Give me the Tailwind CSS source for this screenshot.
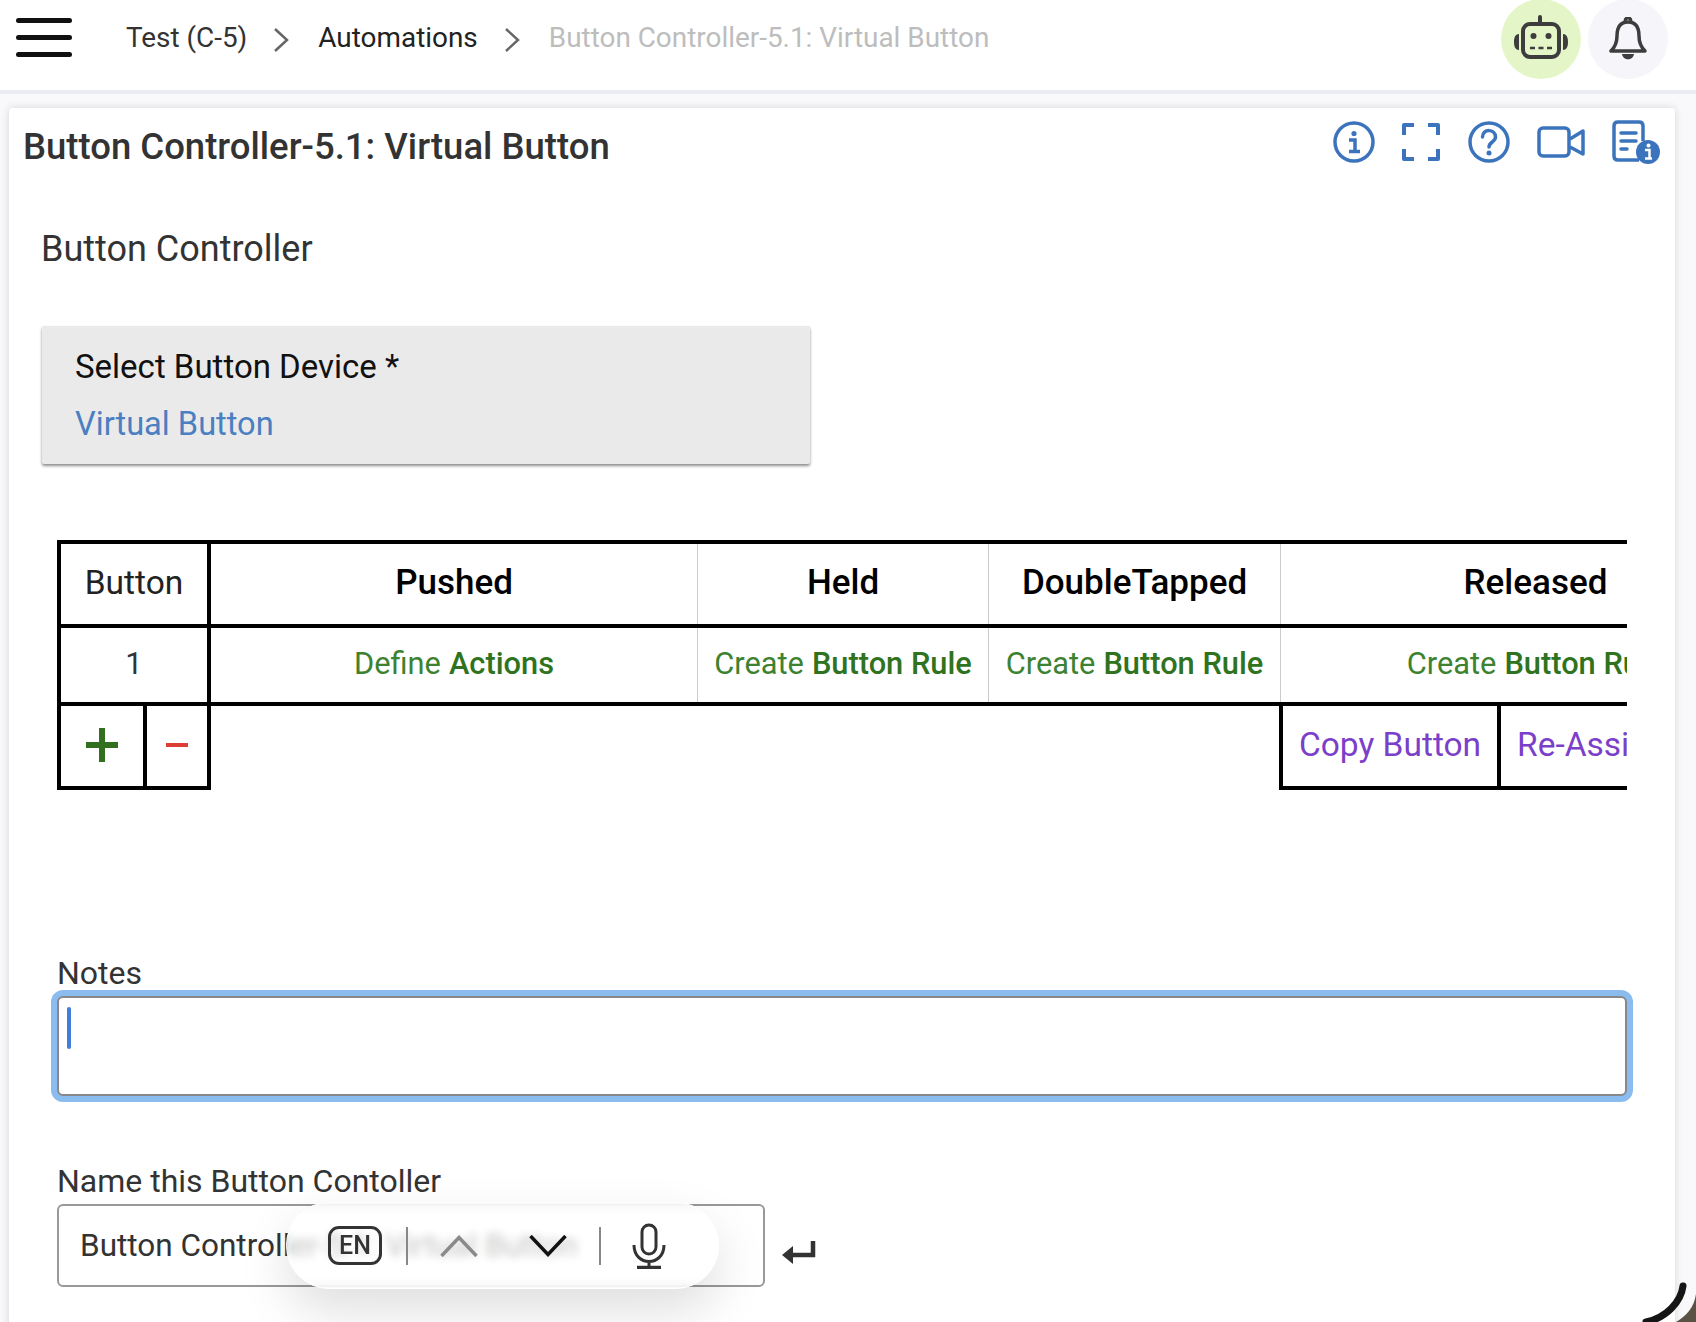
<!doctype html>
<html><head><meta charset="utf-8"><title>Button Controller</title>
<script src="https://cdn.jsdelivr.net/npm/@tailwindcss/browser@4"></script>
</head>
<body class="relative w-[1696px] h-[1322px] overflow-hidden bg-[#f9f9fb] font-['Roboto',sans-serif] text-[#333]">
<header class="h-[94px] bg-white border-b-4 border-[#ebebf3] flex items-center pb-[6px] pl-[16px]">
  <div class="w-[56px] flex flex-col gap-[12px] -mt-[10px]">
    <div class="h-[5px] rounded-full bg-[#111]"></div><div class="h-[5px] rounded-full bg-[#111]"></div><div class="h-[5px] rounded-full bg-[#111]"></div>
  </div>
  <nav class="flex items-center ml-[54px] text-[27.900px] leading-[32px] -mt-[8px]">
    <span class="text-[#333]">Test (C-5)</span>
    <svg class="w-[18px] h-[26px] ml-[26px] mr-[27px] mt-[4px]" viewBox="0 0 18 26" fill="none" stroke="#666" stroke-width="2.5"><path d="M2 2 L14 13 L2 24"/></svg>
    <span class="text-[#222]">Automations</span>
    <svg class="w-[18px] h-[26px] ml-[26px] mr-[27px] mt-[4px]" viewBox="0 0 18 26" fill="none" stroke="#666" stroke-width="2.5"><path d="M2 2 L14 13 L2 24"/></svg>
    <span class="text-[#bdbdbd]">Button Controller-5.1: Virtual Button</span>
  </nav>
  <div class="ml-auto flex gap-[7px] mr-[28px] -mt-[6px]">
    <div class="w-[80px] h-[80px] rounded-full bg-[#e4f6c8] flex items-center justify-center">
      <svg class="w-[56px] h-[46px] -mt-[2px]" viewBox="0 0 56 46" fill="none"><path d="M27 2 V9" stroke="#3d3d3d" stroke-width="4" stroke-linecap="round"/><rect x="10" y="9" width="36" height="33" rx="7" stroke="#3d3d3d" stroke-width="4"/><circle cx="20.500" cy="21" r="3" fill="#3d3d3d"/><circle cx="35.500" cy="21" r="3" fill="#3d3d3d"/><path d="M17 33 H22 M25.500 33 H30.500 M34 33 H39" stroke="#3d3d3d" stroke-width="2.500"/><path d="M6 19 V35 C2 35 1 31 1 27 C1 23 2 19 6 19Z M50 19 V35 C54 35 55 31 55 27 C55 23 54 19 50 19Z" fill="#3d3d3d"/></svg>
    </div>
    <div class="w-[80px] h-[80px] rounded-full bg-[#f5f5fa] flex items-center justify-center">
      <svg class="w-[38px] h-[44px]" viewBox="0 0 38 44" fill="none"><path d="M19 5 C10 5 8 12 8 19 C8 26 6 30 2 34 H36 C32 30 30 26 30 19 C30 12 28 5 19 5Z" stroke="#3d3d3d" stroke-width="3.500" stroke-linejoin="round"/><path d="M16 4 C16 0 22 0 22 4" stroke="#3d3d3d" stroke-width="3"/><path d="M13 37 H25 C24 44 14 44 13 37Z" fill="#3d3d3d"/></svg>
    </div>
  </div>
</header>
<main class="ml-[9px] mt-[14px] w-[1666px] h-[1240px] bg-white rounded-t-[4px] shadow-[0_0_8px_rgba(0,0,0,0.14)]">
  <div class="h-[76px] flex items-start justify-between">
    <h1 class="ml-[14px] mt-[18px] text-[36.500px] leading-[42px] font-medium text-[#333]">Button Controller-5.1: Virtual Button</h1>
    <div class="flex items-center mt-[12px] mr-[15px] text-[#3b74bd]">
      <svg class="w-[42px] h-[42px]" viewBox="0 0 42 42" fill="none" stroke="#3b74bd" stroke-width="3.500"><circle cx="21" cy="21" r="19"/><circle cx="21" cy="12.500" r="2.600" fill="#3b74bd" stroke="none"/><path d="M16 19 H22 V30 M16 30.500 H27" stroke-width="3.500"/></svg>
      <svg class="w-[38px] h-[38px] ml-[27px]" viewBox="0 0 38 38" fill="none" stroke="#3b74bd" stroke-width="4" stroke-linejoin="round"><path d="M12 2 H2 V12 M26 2 H36 V12 M2 26 V36 H12 M36 26 V36 H26"/></svg>
      <svg class="w-[42px] h-[42px] ml-[28px]" viewBox="0 0 42 42" fill="none" stroke="#3b74bd" stroke-width="3.500"><circle cx="21" cy="21" r="19"/><path d="M14.500 16 C14.500 7 27.500 8 27.500 16 C27.500 21 21 21 21 26" stroke-linecap="round"/><circle cx="21" cy="32" r="2.500" fill="#3b74bd" stroke="none"/></svg>
      <svg class="w-[48px] h-[32px] ml-[27px]" viewBox="0 0 48 32" fill="none" stroke="#3b74bd" stroke-width="3.500" stroke-linejoin="round"><rect x="2" y="2" width="30" height="28" rx="4"/><path d="M33 13 L46 5 V28 L33 21"/></svg>
      <svg class="w-[48px] h-[44px] ml-[27px]" viewBox="0 0 48 44" fill="none"><path d="M27 40 H6 Q2 40 2 36 V6 Q2 2 6 2 H27 Q31 2 31 6 V21" stroke="#3b74bd" stroke-width="3.500"/><path d="M9 13 H24 M9 21 H24 M9 29 H15" stroke="#3b74bd" stroke-width="3.500" stroke-linecap="round"/><circle cx="36" cy="32" r="12" fill="#3b74bd"/><circle cx="36.500" cy="25.500" r="2" fill="#fff"/><path d="M33 30 H37.500 V38 M33 38.500 H40" stroke="#fff" stroke-width="2.500"/></svg>
    </div>
  </div>
  <h2 class="ml-[32px] mt-[45px] text-[36px] leading-[40px] text-[#333]">Button Controller</h2>
  <section class="ml-[33px] mt-[57px] w-[768px] h-[138px] bg-[#eaeaea] rounded-[2px] shadow-[0_2px_3px_rgba(0,0,0,0.45)] pl-[33px] pt-[22px]">
    <div class="text-[33px] leading-[38px] text-[#111]">Select Button Device *</div>
    <div class="mt-[19px] text-[32.600px] leading-[38px] text-[#4a7fc1]">Virtual Button</div>
  </section>
  <div class="ml-[48px] mt-[76px] w-[1570px] overflow-hidden">
    <div class="w-[1740px] text-center">
      <div class="grid grid-cols-[154px_486px_291px_292px_510px] h-[88px] border-t-4 border-b-4 border-black items-stretch">
        <div class="border-l-4 border-r-4 border-black flex items-center justify-center pb-[2px] text-[33.500px] text-[#222]">Button</div>
        <div class="flex items-center justify-center pb-[2px] text-[35px] font-medium text-black">Pushed</div>
        <div class="border-l border-[#ccc] flex items-center justify-center pb-[2px] text-[35px] font-medium text-black">Held</div>
        <div class="border-l border-[#ccc] flex items-center justify-center pb-[2px] text-[35px] font-medium text-black">DoubleTapped</div>
        <div class="border-l border-[#ccc] flex items-center justify-center pb-[2px] text-[35px] font-medium text-black">Released</div>
      </div>
      <div class="grid grid-cols-[154px_486px_291px_292px_510px] h-[78px] border-b-4 border-black items-stretch text-[30.800px] text-[#3d8230]">
        <div class="border-l-4 border-r-4 border-black flex items-center justify-center pb-[1px] text-[#333]">1</div>
        <div class="flex items-center justify-center pb-[1px] gap-[8px]"><span>Define</span><span class="font-medium text-[#2f7320]">Actions</span></div>
        <div class="border-l border-[#ccc] flex items-center justify-center pb-[1px] gap-[8px]"><span>Create</span><span class="font-medium text-[#2f7320]">Button Rule</span></div>
        <div class="border-l border-[#ccc] flex items-center justify-center pb-[1px] gap-[8px]"><span>Create</span><span class="font-medium text-[#2f7320]">Button Rule</span></div>
        <div class="border-l border-[#ccc] flex items-center justify-center pb-[1px] gap-[8px]"><span>Create</span><span class="font-medium text-[#2f7320]">Button Rule</span></div>
      </div>
      <div class="flex h-[84px]">
        <div class="w-[154px] flex border-l-4 border-r-4 border-b-4 border-black">
          <div class="w-[86px] border-r-4 border-black flex items-center justify-center pb-[2px]"><svg class="w-[32px] h-[34px]" viewBox="0 0 32 34"><path d="M16 0 V34 M0 17 H32" stroke="#32701f" stroke-width="6"/></svg></div>
          <div class="flex-1 flex items-center justify-center pb-[2px]"><span class="block w-[22px] h-[4px] bg-[#dc3d35]"></span></div>
        </div>
        <div class="w-[1068px]"></div>
        <div class="w-[222px] border-l-4 border-r-4 border-b-4 border-black flex items-center justify-center pb-[2px] text-[33.500px] text-[#7b3fc9]">Copy Button</div>
        <div class="flex-1 border-b-4 border-black flex items-center pb-[2px] text-[33.500px] text-[#7b3fc9] pl-[16px]">Re-Assign</div>
      </div>
    </div>
  </div>
  <label class="block ml-[48px] mt-[165px] text-[32px] leading-[36px] text-[#333]">Notes</label>
  <div class="ml-[48px] mt-[5px] w-[1570px] h-[100px] rounded-[6px] bg-white border-2 border-[#888] ring-[6px] ring-[#8bbcf0] pl-[8px] pt-[9px]">
    <div class="w-[4px] h-[42px] rounded-full bg-[#3d7fdb]"></div>
  </div>
  <label class="block ml-[48px] mt-[67px] text-[32px] leading-[36px] text-[#333]">Name this Button Contoller</label>
  <div class="flex items-center mt-[5px] ml-[48px]">
    <div class="w-[708px] h-[83px] rounded-[6px] border-2 border-[#999] pl-[21px] flex items-center pt-[1px] text-[31.500px] text-[#333] whitespace-nowrap overflow-hidden">Button Controller-5.1: Virtual Button</div>
    <svg class="ml-[17px] mt-[14px] w-[34px] h-[24px]" viewBox="0 0 34 24" fill="none"><path d="M31 0 V14 H8" stroke="#333" stroke-width="4.500"/><path d="M0 14 L11 5 V23Z" fill="#333"/></svg>
  </div>
</main>
<div class="absolute left-[286px] top-[1202px] w-[433px] h-[87px] rounded-[44px] bg-white/70 backdrop-blur-[4px] border border-white shadow-[0_22px_50px_rgba(0,0,0,0.13)] flex items-center">
  <div class="ml-[41px] w-[54px] h-[39px] rounded-[11px] border-[3px] border-[#333] flex items-center justify-center text-[25px] font-medium text-[#333]">EN</div>
  <div class="ml-[24px] w-[2px] h-[38px] bg-[#888]"></div>
  <svg class="ml-[32px] w-[38px] h-[22px]" viewBox="0 0 38 22" fill="none" stroke="#8a8a8a" stroke-width="3.500"><path d="M1.500 21 L19 2.500 L36.500 21"/></svg>
  <svg class="ml-[51px] w-[38px] h-[22px]" viewBox="0 0 38 22" fill="none" stroke="#111" stroke-width="3.500"><path d="M1.500 1 L19 19.500 L36.500 1"/></svg>
  <div class="ml-[32px] w-[2px] h-[38px] bg-[#888]"></div>
  <svg class="ml-[31px] w-[34px] h-[46px]" viewBox="0 0 34 46" fill="none" stroke="#333" stroke-width="3"><rect x="10" y="2" width="14" height="29" rx="7"/><path d="M2 22 C2 44 32 44 32 22 M17 37 V44" /><path d="M5 44.500 H29" stroke-width="3.500"/></svg>
</div>
<svg class="absolute left-[1626px] top-[1272px] w-[70px] h-[50px]" viewBox="0 0 70 50" fill="none"><path d="M70 22 V50 H50 C60 44 68 36 70 22Z" fill="#5b5246"/><path d="M57 14 C55 30 40 46 20 50" stroke="#151515" stroke-width="7" stroke-linecap="round"/></svg>
</body></html>
